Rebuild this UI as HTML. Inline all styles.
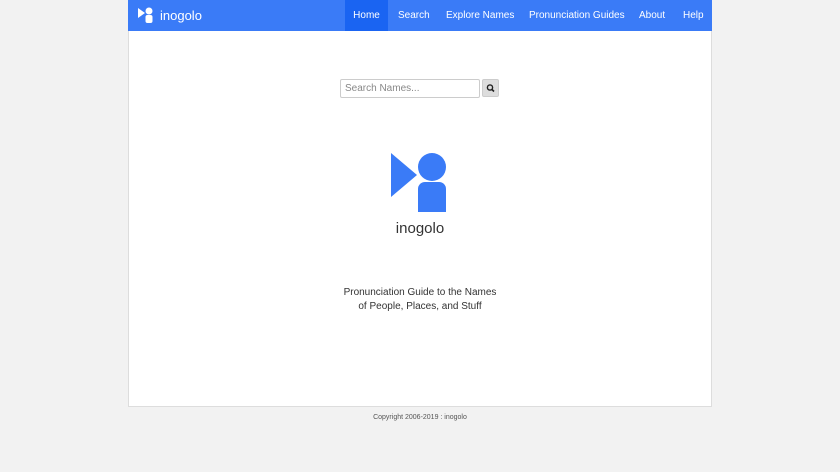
<!DOCTYPE html>
<html><head><style>
body{margin:0;background:#f2f2f2;font-family:"Liberation Sans",sans-serif;width:840px;height:472px;overflow:hidden}
.wrap{position:absolute;left:128px;top:0;width:584px;height:407px;background:#fff;border:1px solid #ddd;border-top:none;box-sizing:border-box}
.nav{position:absolute;left:128px;top:0;width:584px;height:31px;background:#3a7bf7;color:#fff;font-size:10px}
.nav a{position:absolute;top:0;height:31px;line-height:32px;color:#fff;text-decoration:none}
.brand{position:absolute;left:32px;top:0;line-height:31px;font-size:13px}
</style></head><body>
<div class="wrap"></div>
<div class="nav">
<svg style="position:absolute;left:10px;top:7px" width="16" height="16" viewBox="0 0 16 16"><polygon points="0,1 7,6 0,11" fill="#fff"/><circle cx="11" cy="4" r="3.5" fill="#fff"/><rect x="7.5" y="8" width="7" height="8" rx="2" fill="#fff"/></svg>
<span class="brand">inogolo</span>
<a style="left:217px;width:43px;background:#1a64f2;text-align:center">Home</a>
<a style="left:270px">Search</a>
<a style="left:318px">Explore Names</a>
<a style="left:401px">Pronunciation Guides</a>
<a style="left:511px">About</a>
<a style="left:555px">Help</a>
</div>
<div style="position:absolute;left:340px;top:79px;height:17px;border:1px solid #ccc;border-radius:2px;font-size:10px;color:#888;line-height:17px;padding-left:4px;width:134px">Search Names...</div>
<div style="position:absolute;left:482px;top:79px;width:17px;height:18px;background:#ddd;border:1px solid #ccc;box-sizing:border-box;border-radius:2px"><svg width="15" height="16" viewBox="0 0 15 16"><circle cx="7" cy="7.5" r="2.6" fill="none" stroke="#222" stroke-width="1.4"/><line x1="9" y1="9.5" x2="11" y2="11.5" stroke="#222" stroke-width="1.6"/></svg></div>
<svg style="position:absolute;left:391px;top:153px" width="56" height="60" viewBox="0 0 56 60"><polygon points="0,0 26,22 0,44" fill="#3a7bf7"/><circle cx="41" cy="14" r="14" fill="#3a7bf7"/><path d="M27,36 a7,7 0 0 1 7,-7 h14 a7,7 0 0 1 7,7 v23 h-28z" fill="#3a7bf7"/></svg>
<div style="position:absolute;left:0;width:840px;top:220px;text-align:center;font-size:15px;color:#333">inogolo</div>
<div style="position:absolute;left:0;width:840px;top:286px;text-align:center;font-size:10px;color:#333;line-height:13.5px">Pronunciation Guide to the Names<br>of People, Places, and Stuff</div>
<div style="position:absolute;left:0;width:840px;top:414px;text-align:center;font-size:7px;color:#555">Copyright 2006-2019 : inogolo</div>
</body></html>
